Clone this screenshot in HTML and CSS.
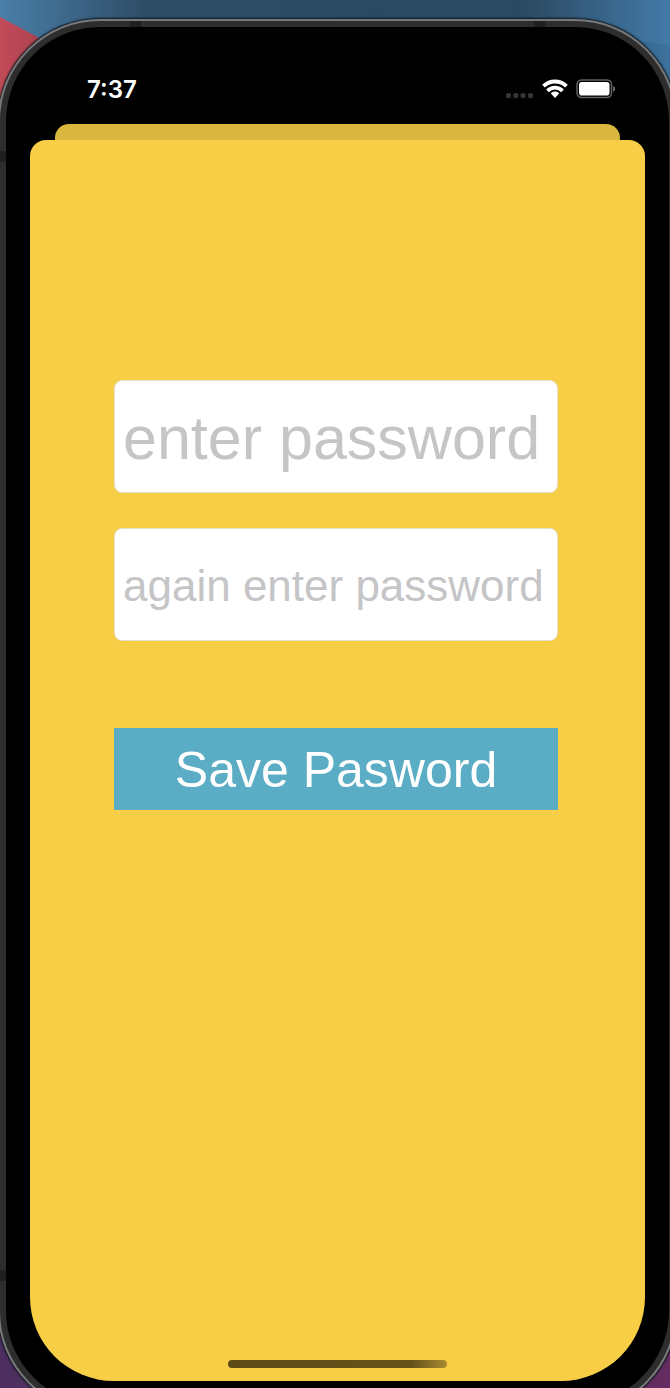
FILE: index.html
```html
<!DOCTYPE html>
<html lang="en">
<head>
<meta charset="utf-8">
<meta name="viewport" content="width=device-width, initial-scale=1">
<title>Save password</title>
<link rel="stylesheet" href="styles.css">
</head>
<body>
<svg class="wallpaper" viewBox="0 0 670 1388" preserveAspectRatio="none" aria-hidden="true">
  <defs>
    <linearGradient id="sky" x1="0" x2="1" y1="0" y2="0">
      <stop offset="0" stop-color="#4a7fa8"/><stop offset=".22" stop-color="#2e4c66"/>
      <stop offset=".78" stop-color="#2b4961"/><stop offset="1" stop-color="#437aa8"/>
    </linearGradient>
    <linearGradient id="dusk" x1="0" x2="1" y1="0" y2="0">
      <stop offset="0" stop-color="#4c2f60"/><stop offset="1" stop-color="#642c60"/>
    </linearGradient>
    <linearGradient id="rose" x1="0" x2="1" y1="0" y2="0">
      <stop offset="0" stop-color="#c14b59"/><stop offset="1" stop-color="#a33d4b"/>
    </linearGradient>
  </defs>
  <rect width="670" height="700" fill="url(#sky)"/>
  <path d="M340 0C440 22 560 30 670 45V200H340Z" fill="#1d496c" opacity=".15"/>
  <path d="M0 17L60 49V200H0Z" fill="url(#rose)"/>
  <rect y="700" width="670" height="688" fill="url(#dusk)"/>
</svg>
<div class="phone">
  <span class="band band-top-left"></span>
  <span class="band band-top-right"></span>
  <span class="band band-side-upper"></span>
  <span class="band band-side-lower"></span>
  <div class="screen">
    <header class="status">
      <time class="clock">7:37</time>
      <div class="indicators">
        <svg class="signal" width="28" height="6" viewBox="0 0 28 6" role="img" aria-label="No signal" fill="#343434">
          <rect x="0" y="0" width="5" height="5" rx="1.5"/><rect x="7.3" y="0" width="5" height="5" rx="1.5"/>
          <rect x="14.6" y="0" width="5" height="5" rx="1.5"/><rect x="22" y="0" width="5" height="5" rx="1.5"/>
        </svg>
        <svg width="26" height="20" viewBox="0 0 26 20" role="img" aria-label="Wi-Fi" fill="none" stroke="#fff" stroke-width="3.8">
          <path d="M1.5 7.2C8 .9 18 .9 24.500 7.200"/>
          <path d="M5.500 11.800C9.900 7.500 16.100 7.500 20.500 11.800"/>
          <path d="M13 12.600C11.300 12.600 9.900 13.200 8.900 14.400L13 18.900L17.100 14.400C16.100 13.200 14.700 12.600 13 12.600Z" fill="#fff" stroke="none"/>
        </svg>
        <svg width="40" height="20" viewBox="0 0 40 20" role="img" aria-label="Battery full">
          <rect x="1" y="1" width="34.500" height="17.500" rx="4.500" fill="none" stroke="#626262" stroke-width="1.500"/>
          <rect x="3" y="3" width="30.500" height="13.500" rx="2.800" fill="#fff"/>
          <path d="M37.200 7C39.800 8 39.800 11.700 37.200 12.700Z" fill="#767676"/>
        </svg>
      </div>
    </header>
    <div class="sheet-behind"></div>
    <main class="sheet">
      <form class="form">
        <input class="field field-large" type="password" placeholder="enter password" aria-label="enter password">
        <input class="field field-small" type="password" placeholder="again enter password" aria-label="again enter password">
        <button class="save" type="button">Save Pasword</button>
      </form>
      <div class="home-indicator"></div>
    </main>
  </div>
</div>
</body>
</html>
```
FILE: styles.css
```css
* { box-sizing: border-box; }

html { height: 100%; }

body {
  margin: 0;
  height: 100%;
  overflow: hidden;
  display: flex;
  flex-direction: column;
  background: #2b4961;
  font-family: Inter, "Liberation Sans", sans-serif;
}

.wallpaper {
  position: absolute;
  inset: 0;
  width: 100%;
  height: 100%;
}

.phone {
  position: relative;
  display: flex;
  flex: none;
  margin: 19px -7px 0 -2px;
  min-height: calc(100vh + 6px);
  padding: 24px;
  border: 8px solid #2d2d2d;
  border-radius: 102px;
  background: #000;
  box-shadow: inset 0 0 0 1px #000, 0 0 2px 1px #0d151c;
}

.phone::before {
  content: "";
  position: absolute;
  inset: -8px;
  border: 2px solid #77797a;
  border-radius: 102px;
}

.band {
  position: absolute;
  background: #1f1f1f;
}

.band-top-left,
.band-top-right { top: -6px; width: 11px; height: 6px; }
.band-top-left { left: 124px; }
.band-top-right { right: 124px; }

.band-side-upper,
.band-side-lower { left: -6px; width: 6px; height: 11px; }
.band-side-upper { top: 124px; }
.band-side-lower { bottom: 124px; }

.screen {
  flex: 1;
  min-width: 0;
  display: flex;
  flex-direction: column;
  overflow: hidden;
  border-radius: 0 0 84px 84px;
}

.status {
  height: 73px;
  padding: 3px 29px 0 57px;
  display: flex;
  align-items: center;
  justify-content: space-between;
  color: #fff;
}

.clock {
  padding-top: 2px;
  font-size: 24px;
  font-weight: 600;
  line-height: 32px;
}

.indicators {
  display: flex;
  align-items: center;
  gap: 8px;
}

.signal { align-self: flex-end; }

.sheet-behind {
  height: 16px;
  margin: 0 25px;
  border-radius: 14px 14px 0 0;
  background: #d9b63d;
}

.sheet {
  flex: 1;
  display: flex;
  flex-direction: column;
  justify-content: space-between;
  border-radius: 16px 16px 0 0;
  background: #f7ce46;
}

.form {
  display: flex;
  flex-direction: column;
  padding: 240px 87px 0 84px;
}

.field {
  width: 100%;
  height: 113px;
  margin: 0 0 35px;
  padding: 2px 0 0 8px;
  border: 1px solid #e5dfcc;
  border-radius: 8px;
  background: #fff;
  font-family: "Liberation Sans", sans-serif;
  color: #000;
}

.field::placeholder { color: #c5c5c7; opacity: 1; }

.field-large { font-size: 61px; }
.field-small { font-size: 44px; }

.save {
  height: 82px;
  margin-top: 52px;
  padding: 0;
  border: 0;
  background: #5aadc5;
  color: #fff;
  font-family: "Liberation Sans", sans-serif;
  font-size: 50px;
  line-height: 84px;
}

.home-indicator {
  align-self: center;
  width: 219px;
  height: 8px;
  margin-bottom: 13px;
  border-radius: 4px;
  background: linear-gradient(90deg, #5c4b17 0%, #655419 84%, #a98c31 100%);
}
```
